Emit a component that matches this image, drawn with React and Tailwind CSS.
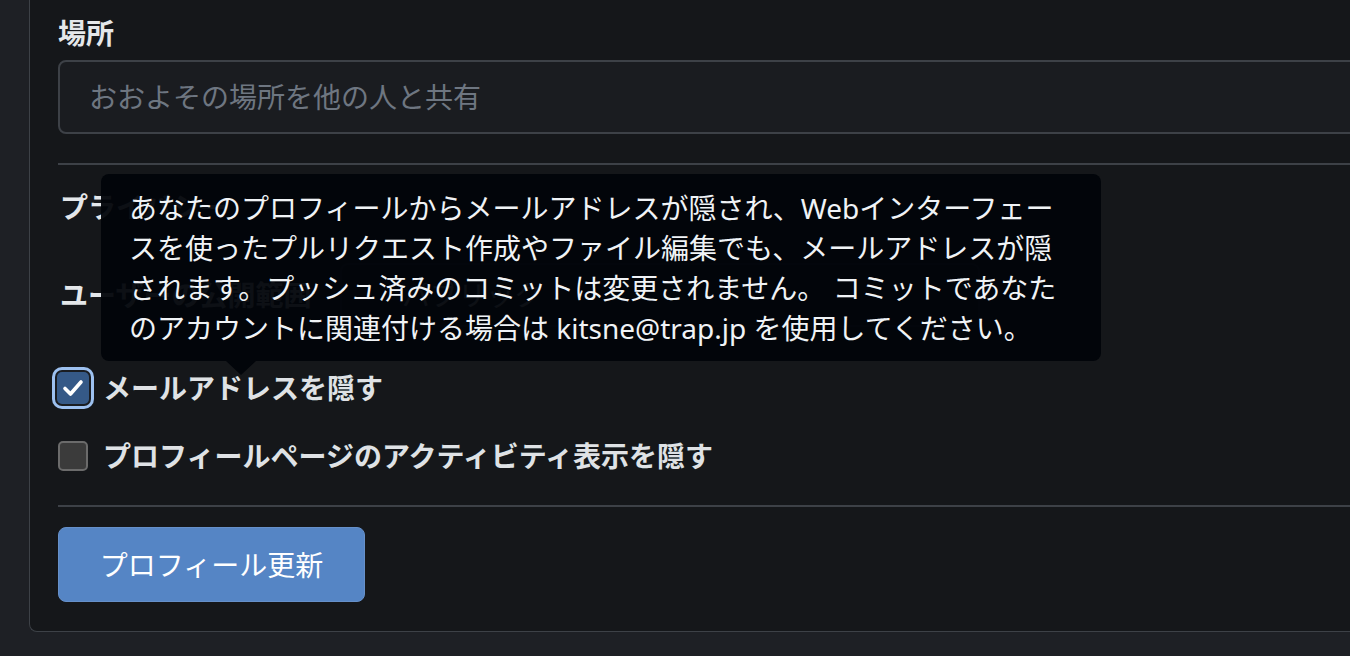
export default function App() {
  const font = { fontFamily: '"Noto Sans", "Noto Sans CJK JP", sans-serif' };
  return (
    <div className="w-[1350px] h-[656px] overflow-hidden bg-[#1e2025] pl-[29px]" style={font}>
      <div className="relative w-[1400px] h-[632px] bg-[#15171a] border-l border-b border-[#3d4147] rounded-bl-[8px] pl-[28px] pt-[13px]">
        <div className="h-[40px] leading-[40px] text-[28px] font-bold text-[#e4e7ea]">場所</div>
        <div className="mt-[7px] h-[74px] rounded-[8px] border-2 border-[#3d4147] bg-[#1a1c20] flex items-center pl-[29px] text-[28px] text-[#6e7681]">
          おおよその場所を他の人と共有
        </div>
        <div className="mt-[29px] h-[2px] bg-[#3d4147]"></div>
        <div className="mt-[22px] h-[40px] leading-[40px] text-[28px] font-bold text-[#e4e7ea] pl-[2px]">プライバシー</div>
        <div className="mt-[36px] flex items-center h-[64px]">
          <div className="w-[282px] pl-[2px] text-[28px] font-bold text-[#e4e7ea]">ユーザーの公開範囲</div>
          <div className="w-[640px] h-[64px] rounded-[8px] border-2 border-[#2f3338] bg-[#1a1c20] flex items-center pl-[60px] text-[28px] text-[#e4e7ea]">
            パブリック
          </div>
        </div>
        <div className="mt-[41px] flex items-center h-[40px]">
          <div className="w-[30px] h-[30px] flex items-center justify-center">
            <div className="w-[32px] h-[32px] shrink-0 rounded-[5px] bg-[#355987] shadow-[0_0_0_2px_#1a1d22,0_0_0_5px_#9dc1f0] flex items-center justify-center">
              <svg width="22" height="20" viewBox="0 0 22 20" fill="none">
                <path d="M3 10.5 L8.5 16 L19 4" stroke="white" strokeWidth="3.6" strokeLinecap="round" strokeLinejoin="round" />
              </svg>
            </div>
          </div>
          <div className="ml-[15px] text-[28px] font-bold text-[#dfe2e5] leading-[40px]">メールアドレスを隠す</div>
        </div>
        <div className="mt-[28px] flex items-center h-[40px]">
          <div className="w-[30px] h-[30px] rounded-[5px] bg-[#3b3b3b] border-2 border-[#6b6b6b]"></div>
          <div className="ml-[15px] text-[28px] font-bold text-[#dfe2e5] leading-[40px]">プロフィールページのアクティビティ表示を隠す</div>
        </div>
        <div className="mt-[29px] h-[2px] bg-[#3d4147]"></div>
        <div className="mt-[20px] w-[307px] h-[75px] rounded-[8px] bg-[#5585c5] border border-[#6690c9] flex items-center justify-center text-[28px] text-white">
          プロフィール更新
        </div>

        <div className="absolute left-[71px] top-[174px]">
          <div className="relative rounded-[8px] bg-[#010409]/95 pl-[28px] pr-[28px] pt-[14px] pb-[13px] w-[1000px] text-[28px] leading-[40px] text-[#f0f3f6] whitespace-nowrap">
            <div>あなたのプロフィールからメールアドレスが隠され、Webインターフェー</div>
            <div>スを使ったプルリクエスト作成やファイル編集でも、メールアドレスが隠</div>
            <div>されます。プッシュ済みのコミットは変更されません。 コミットであなた</div>
            <div>のアカウントに関連付ける場合は kitsne@trap.jp を使用してください。</div>
            <div className="absolute left-[125px] -bottom-[14px] w-0 h-0 border-l-[15px] border-r-[15px] border-t-[14px] border-l-transparent border-r-transparent border-t-[#010409]/95"></div>
          </div>
        </div>
      </div>
    </div>
  );
}
